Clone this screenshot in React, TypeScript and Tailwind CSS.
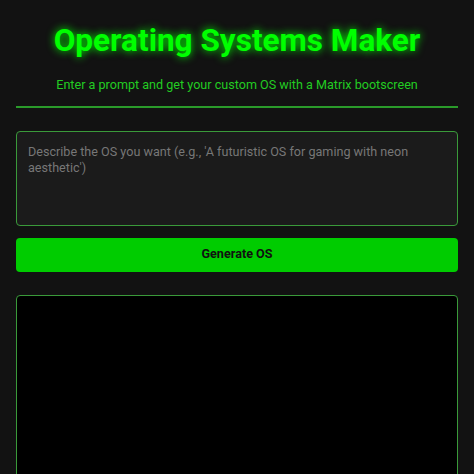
export default function App() {
  return (
    <div className="min-h-screen bg-[#121212] px-4 font-['Roboto',sans-serif]">
      <header className="border-b-2 border-[#2a9a2a] pt-[22px] pb-[13px] text-center">
        <h1 className="text-[31.5px] font-bold leading-[1.2] text-[#00ff00] [text-shadow:0_0_8px_#00ff00]">
          Operating Systems Maker
        </h1>
        <p className="mt-[17px] text-[12.6px] leading-[16px] text-[#22cc22]">
          Enter a prompt and get your custom OS with a Matrix bootscreen
        </p>
      </header>

      <main className="pt-[23px]">
        <textarea
          className="block h-[95px] w-full resize-none rounded-[4px] border border-[#3a9a3a] bg-[#1b1b1b] px-[11px] pt-[12px] text-[12.6px] leading-[1.25] text-[#dddddd] outline-none placeholder:text-[#777777]"
          placeholder="Describe the OS you want (e.g., 'A futuristic OS for gaming with neon aesthetic')"
        />
        <button className="mt-3 block h-[34px] w-full rounded-[4px] bg-[#00cc00] text-[12.6px] font-bold text-[#111111]">
          Generate OS
        </button>
        <div className="mt-[23px] h-[300px] rounded-[4px] border border-[#3a9a3a] bg-black" />
      </main>
    </div>
  )
}
